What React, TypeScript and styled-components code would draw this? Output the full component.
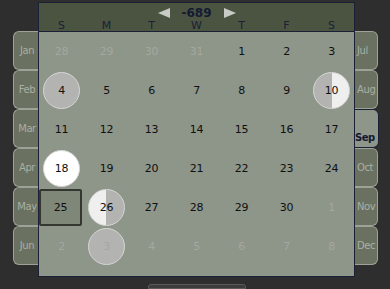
import styled, { createGlobalStyle, css } from "styled-components";

const GlobalStyle = createGlobalStyle`
  body {
    margin: 0;
    background: #2e2e2e;
    font-family: Tahoma, "DejaVu Sans", Verdana, sans-serif;
  }
`;

type Marker = "gray" | "white" | "grayWhite" | "whiteGray" | "box";

interface Day {
  n: number;
  other?: boolean;
  marker?: Marker;
}

const LEFT_MONTHS = ["Jan", "Feb", "Mar", "Apr", "May", "Jun"];
const RIGHT_MONTHS = ["Jul", "Aug", "Sep", "Oct", "Nov", "Dec"];
const WEEKDAYS = ["S", "M", "T", "W", "T", "F", "S"];
const SELECTED = "Sep";

const markers: Record<string, Marker> = {
  "4": "gray",
  "10": "grayWhite",
  "18": "white",
  "25": "box",
  "26": "whiteGray",
};

const buildDays = (): Day[] => {
  const days: Day[] = [];
  [28, 29, 30, 31].forEach((n) => days.push({ n, other: true }));
  for (let n = 1; n <= 30; n++) days.push({ n, marker: markers[String(n)] });
  for (let n = 1; n <= 8; n++)
    days.push({ n, other: true, marker: n === 3 ? "gray" : undefined });
  return days;
};

const Page = styled.div`
  width: 390px;
  height: 289px;
  overflow: hidden;
  display: flex;
  flex-direction: column;
  align-items: flex-start;
`;

const Main = styled.div`
  display: flex;
  padding: 2px 0 0 13px;
`;

const TabColumn = styled.div`
  display: flex;
  flex-direction: column;
  padding-top: 29px;
`;

const Tab = styled.div<{ $side: "left" | "right"; $active?: boolean }>`
  box-sizing: border-box;
  width: 25px;
  height: 39px;
  display: flex;
  align-items: center;
  background: #6a7160;
  border: 1px solid #9da296;
  color: #a9afa4;
  font-size: 10px;
  letter-spacing: -0.4px;
  overflow: hidden;
  white-space: nowrap;
  ${(p) =>
    p.$side === "left"
      ? css`
          justify-content: center;
          padding-left: 2px;
          border-right: none;
          border-radius: 6px 0 0 6px;
        `
      : css`
          justify-content: flex-start;
          padding-left: 2px;
          border-left: none;
          border-radius: 0 6px 6px 0;
          width: 23px;
        `}
  ${(p) =>
    p.$active &&
    css`
      background: #8e9589;
      border: 1px solid #1c2036;
      border-left: none;
      width: 25px;
      margin-left: -1px;
      color: #141a34;
      font-weight: bold;
      letter-spacing: -0.5px;
      align-items: flex-end;
      padding: 0 0 4px 1px;
    `}
`;

const Panel = styled.div`
  width: 315px;
  border: 1px solid #1c2036;
  background: #8e9589;
  position: relative;
  z-index: 1;
`;

const Header = styled.div`
  height: 28px;
  background: #4b5441;
  border-bottom: 1px solid #1c2036;
  display: flex;
  flex-direction: column;
`;

const TitleRow = styled.div`
  height: 16px;
  display: flex;
  align-items: center;
  justify-content: center;
  gap: 10px;
  padding-top: 2px;
`;

const Title = styled.span`
  color: #141a34;
  font-weight: bold;
  font-size: 12px;
  width: 34px;
  text-align: center;
`;

const Arrow = styled.svg`
  width: 12px;
  height: 10px;
  display: block;
`;

const WeekRow = styled.div`
  display: grid;
  grid-template-columns: repeat(7, 45px);
`;

const WeekDay = styled.span`
  text-align: center;
  color: #1a2036;
  font-size: 11px;
  line-height: 10px;
`;

const Grid = styled.div`
  display: grid;
  grid-template-columns: repeat(7, 45px);
  grid-auto-rows: 39px;
  padding-bottom: 10px;
`;

const markerStyles: Record<Marker, ReturnType<typeof css>> = {
  gray: css`
    background: #b3b3b2;
  `,
  white: css`
    background: #ffffff;
  `,
  grayWhite: css`
    background: linear-gradient(90deg, #b3b3b2 50%, #efefef 50%);
  `,
  whiteGray: css`
    background: linear-gradient(90deg, #efefef 50%, #b3b3b2 50%);
  `,
  box: css``,
};

const Cell = styled.div<{ $box?: boolean }>`
  display: flex;
  align-items: center;
  justify-content: center;
  box-sizing: border-box;
  ${(p) =>
    p.$box &&
    css`
      margin: 1px 2px 1px 0;
      background: #7f8778;
      border: 2px solid #33372f;
      border-radius: 2px;
    `}
`;

const Circle = styled.div<{ $marker: Marker }>`
  box-sizing: border-box;
  width: 37px;
  height: 37px;
  border-radius: 50%;
  border: 1px solid #d6d6d4;
  display: flex;
  align-items: center;
  justify-content: center;
  ${(p) => markerStyles[p.$marker]}
`;

const Num = styled.span<{ $other?: boolean }>`
  font-size: 11px;
  letter-spacing: -0.3px;
  color: ${(p) => (p.$other ? "#a3a89f" : "#101010")};
`;

const BottomButton = styled.div`
  margin: 7px 0 0 148px;
  width: 96px;
  height: 10px;
  background: #3c3c3c;
  border: 1px solid #5a5a5a;
  border-radius: 3px 3px 0 0;
`;

const App = () => {
  const days = buildDays();

  return (
    <>
      <GlobalStyle />
      <Page>
        <Main>
          <TabColumn>
            {LEFT_MONTHS.map((m) => (
              <Tab key={m} $side="left">
                {m}
              </Tab>
            ))}
          </TabColumn>

          <Panel>
            <Header>
              <TitleRow>
                <Arrow viewBox="0 0 12 10">
                  <polygon points="0,5 12,0 12,10" fill="#c9cbc6" />
                </Arrow>
                <Title>-689</Title>
                <Arrow viewBox="0 0 12 10">
                  <polygon points="12,5 0,0 0,10" fill="#c9cbc6" />
                </Arrow>
              </TitleRow>
              <WeekRow>
                {WEEKDAYS.map((d, i) => (
                  <WeekDay key={i}>{d}</WeekDay>
                ))}
              </WeekRow>
            </Header>

            <Grid>
              {days.map((d, i) => {
                const num = <Num $other={d.other}>{d.n}</Num>;
                if (d.marker === "box") {
                  return (
                    <Cell key={i} $box>
                      {num}
                    </Cell>
                  );
                }
                return (
                  <Cell key={i}>
                    {d.marker ? <Circle $marker={d.marker}>{num}</Circle> : num}
                  </Cell>
                );
              })}
            </Grid>
          </Panel>

          <TabColumn>
            {RIGHT_MONTHS.map((m) => (
              <Tab key={m} $side="right" $active={m === SELECTED}>
                {m}
              </Tab>
            ))}
          </TabColumn>
        </Main>
        <BottomButton />
      </Page>
    </>
  );
};

export default App;
